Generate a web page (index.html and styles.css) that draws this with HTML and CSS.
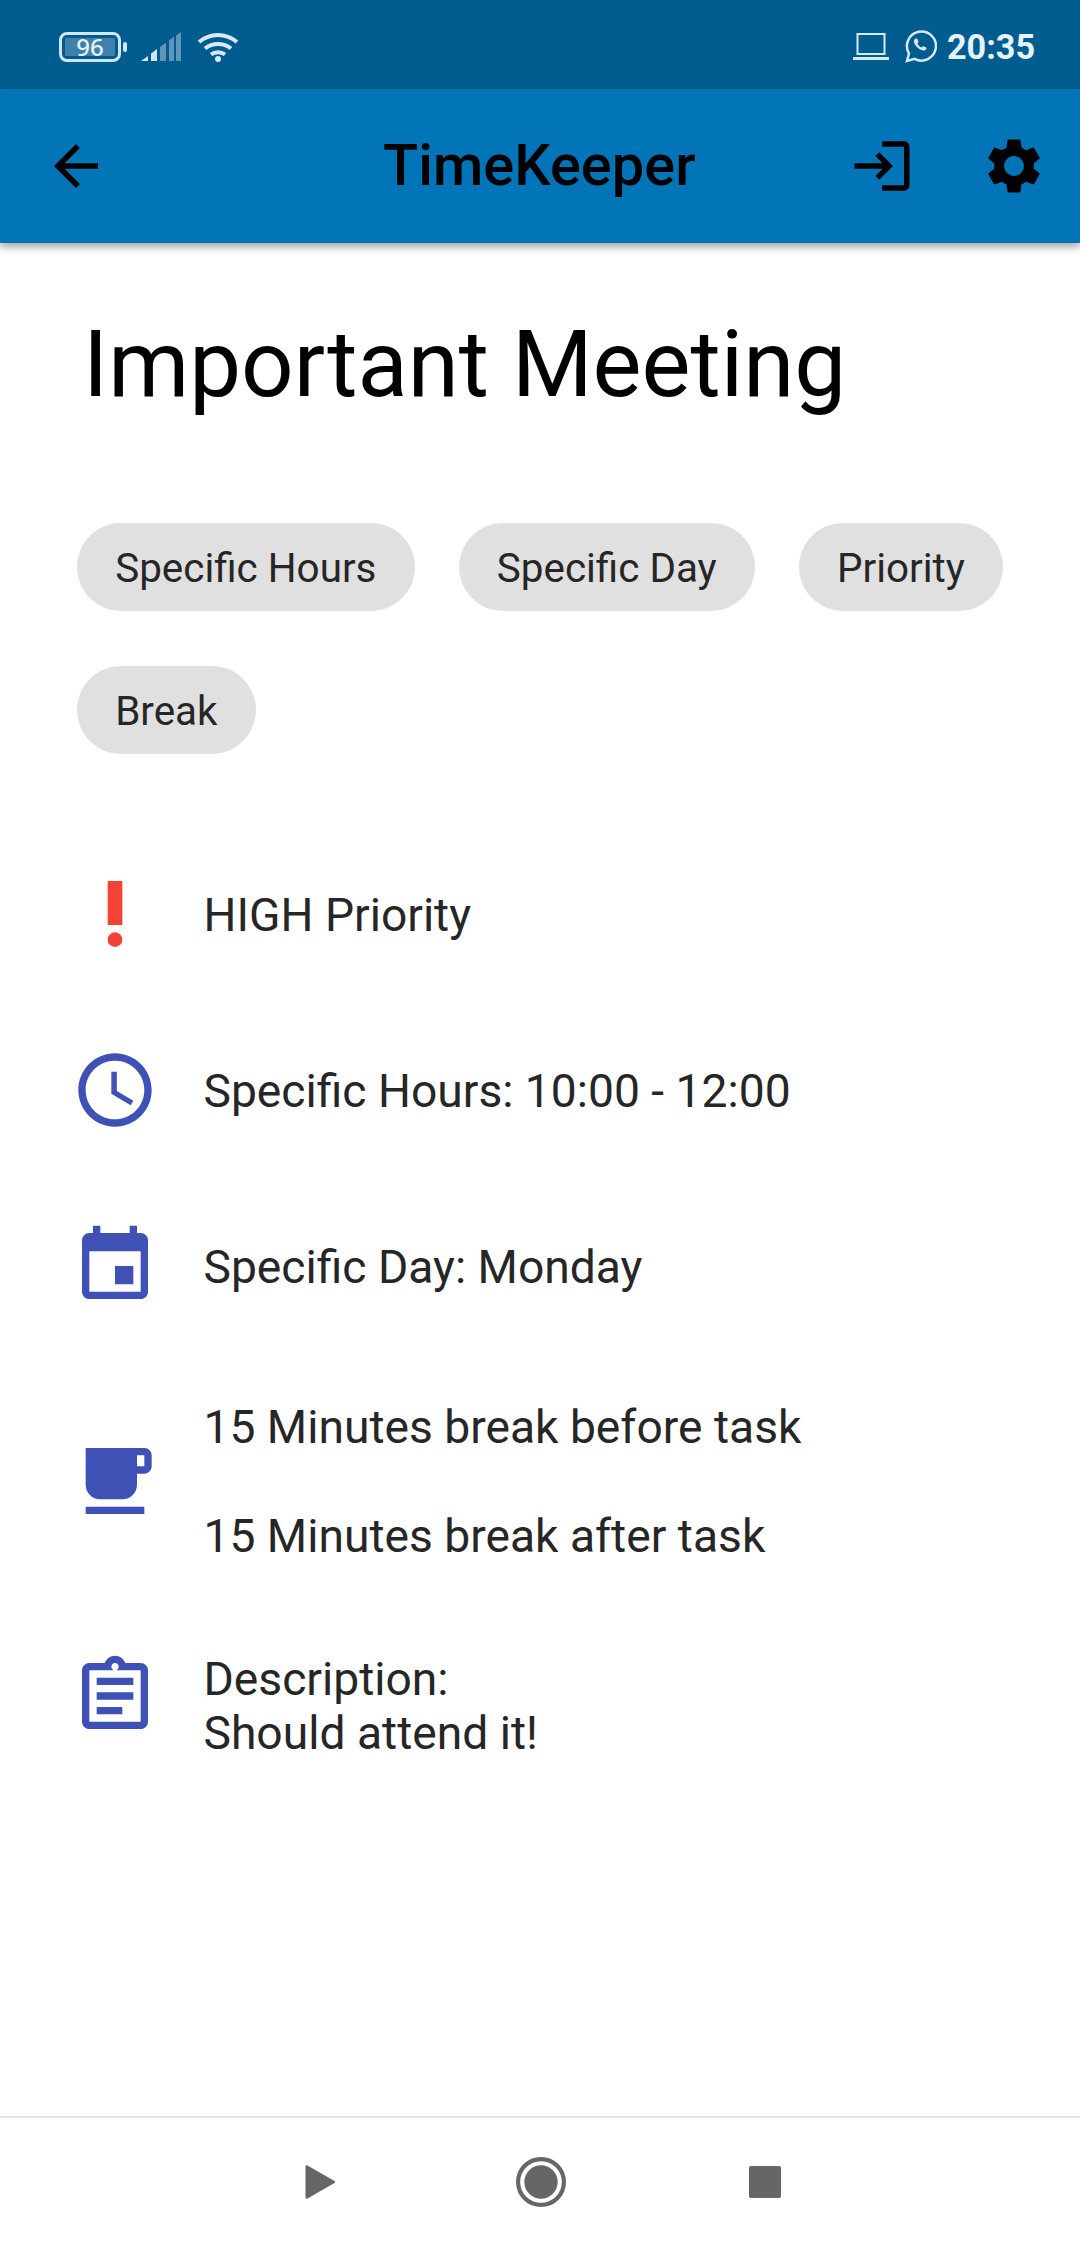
FILE: index.html
```html
<!DOCTYPE html>
<html lang="en">
<head>
<meta charset="utf-8">
<title>TimeKeeper</title>
<link rel="stylesheet" href="styles.css">
</head>
<body>
<div class="page">
  <div class="status">
    <div class="status-group">
      <div class="battery"><span class="bat-fill">96</span></div>
      <div class="bat-nub"></div>
      <svg class="s-signal" viewBox="0 0 40 30"><path class="on" d="M0 29l7-5v5zM10 21.500l6-4.500v12h-6z"/><path class="off" d="M19 15l6-4.500v18.500h-6zM28 8.500l5-4v24.500h-5zM35 3.500l5-3.500v29h-5z"/></svg>
      <svg class="s-wifi" viewBox="0 0 42 30"><path class="wifi-arc" d="M2 10c11-9.500 27-9.500 38 0M8 16.500c7.500-6 18.500-6 26 0M14 22.500c4-3 10-3 14 0"/><circle cx="21" cy="27" r="3" class="wifi-dot"/></svg>
    </div>
    <div class="status-group status-right">
      <svg class="s-laptop" viewBox="0 0 36 27"><rect x="4.500" y="1" width="27" height="20" class="laptop-line"/><path class="laptop-base" d="M0 24h36v3H0z"/></svg>
      <svg class="s-whats" viewBox="0 0 32 33"><path class="whats-line" d="M2.500 31l2-7.500A14.500 14.500 0 1 1 10 28.800z"/><path class="whats-phone" d="M11 8.500c-1.800 1.300-2 3.300-.8 5.500 1.500 2.700 3.700 4.900 6.500 6.100 2.200 1 4.200.4 5.200-1.400.3-.5.1-1-.3-1.200l-2.400-1.200c-.4-.2-.8-.1-1.100.3l-.8 1c-2-.8-3.500-2.300-4.400-4.200l.8-.8c.3-.3.3-.7.2-1.100l-1-2.400c-.3-.6-.9-.8-1.400-.6z"/></svg>
      <span class="time">20:35</span>
    </div>
  </div>

  <header class="appbar">
    <svg class="bar-icon back" viewBox="0 0 24 24"><path d="M20 11H7.830l5.590-5.590L12 4l-8 8 8 8 1.410-1.410L7.830 13H20v-2z"/></svg>
    <h1 class="app-title">TimeKeeper</h1>
    <svg class="bar-icon login" viewBox="0 0 24 24"><path d="M11 7L9.600 8.400l2.600 2.600H2v2h10.200l-2.600 2.600L11 17l5-5-5-5zm9 12h-8v2h8c1.100 0 2-.9 2-2V5c0-1.100-.9-2-2-2h-8v2h8v14z"/></svg>
    <svg class="bar-icon gear" viewBox="0 0 24 24"><path d="M19.140 12.940c.04-.3.06-.61.06-.94 0-.32-.02-.64-.07-.94l2.030-1.580c.18-.14.23-.41.12-.61l-1.920-3.320c-.12-.22-.37-.29-.59-.22l-2.390.96c-.5-.38-1.030-.7-1.620-.94l-.36-2.540c-.04-.24-.24-.41-.48-.41h-3.840c-.24 0-.43.17-.47.41l-.36 2.540c-.59.24-1.130.57-1.620.94l-2.390-.96c-.22-.08-.47 0-.59.22L2.740 8.870c-.12.21-.08.47.12.61l2.030 1.580c-.05.3-.09.63-.09.94s.02.64.07.94l-2.030 1.580c-.18.14-.23.41-.12.61l1.920 3.320c.12.22.37.29.59.22l2.390-.96c.5.38 1.030.7 1.620.94l.36 2.540c.05.24.24.41.48.41h3.840c.24 0 .44-.17.47-.41l.36-2.540c.59-.24 1.130-.56 1.620-.94l2.390.96c.22.08.47 0 .59-.22l1.920-3.320c.12-.22.07-.47-.12-.61l-2.010-1.580zM12 15.600c-1.980 0-3.600-1.620-3.600-3.600s1.620-3.600 3.600-3.600 3.600 1.620 3.600 3.600-1.620 3.600-3.600 3.600z"/></svg>
  </header>

  <main class="content">
    <h2 class="title">Important Meeting</h2>
    <div class="chips">
      <span class="chip">Specific Hours</span>
      <span class="chip">Specific Day</span>
      <span class="chip">Priority</span>
      <span class="chip">Break</span>
    </div>
    <div class="list">
      <div class="row">
        <svg class="icon red" viewBox="0 0 24 24"><circle cx="12" cy="19" r="2"/><path d="M10 3h4v12h-4z"/></svg>
        <div class="row-text"><p class="line">HIGH Priority</p></div>
      </div>
      <div class="row">
        <svg class="icon indigo" viewBox="0 0 24 24"><path d="M11.990 2C6.470 2 2 6.480 2 12s4.470 10 9.990 10C17.520 22 22 17.520 22 12S17.520 2 11.990 2zM12 20c-4.420 0-8-3.580-8-8s3.580-8 8-8 8 3.580 8 8-3.580 8-8 8z"/><path d="M12.500 7H11v6l5.250 3.150.75-1.230-4.500-2.670z"/></svg>
        <div class="row-text"><p class="line">Specific Hours: 10:00 - 12:00</p></div>
      </div>
      <div class="row">
        <svg class="icon indigo" viewBox="0 0 24 24"><path d="M17 12h-5v5h5v-5zM16 1v2H8V1H6v2H5c-1.110 0-1.990.9-1.990 2L3 19c0 1.100.89 2 2 2h14c1.100 0 2-.9 2-2V5c0-1.100-.9-2-2-2h-1V1h-2zm3 18H5V8h14v11z"/></svg>
        <div class="row-text"><p class="line">Specific Day: Monday</p></div>
      </div>
      <div class="row">
        <svg class="icon indigo" viewBox="0 0 24 24"><path d="M20 3H4v10c0 2.210 1.790 4 4 4h6c2.210 0 4-1.790 4-4v-3h2c1.110 0 2-.9 2-2V5c0-1.110-.89-2-2-2zm0 5h-2V5h2v3zM4 19h16v2H4z"/></svg>
        <div class="row-text breaks"><p class="line">15 Minutes break before task</p><p class="line">15 Minutes break after task</p></div>
      </div>
      <div class="row row-top">
        <svg class="icon indigo" viewBox="0 0 24 24"><path d="M19 3h-4.180C14.400 1.840 13.300 1 12 1c-1.300 0-2.400.84-2.820 2H5c-1.100 0-2 .9-2 2v14c0 1.100.9 2 2 2h14c1.100 0 2-.9 2-2V5c0-1.100-.9-2-2-2zm-7 0c.55 0 1 .45 1 1s-.45 1-1 1-1-.45-1-1 .45-1 1-1zm7 16H5V5h14v14zM7 15h7v2H7zm0-4h10v2H7zm0-4h10v2H7z"/></svg>
        <div class="row-text desc"><p class="line">Description:<br>Should attend it!</p></div>
      </div>
    </div>
  </main>

  <nav class="navbar">
    <svg class="nav-play" viewBox="0 0 30 36"><path d="M2 1.500L29 17c.8.500.8 1.500 0 2L2 34.500c-1 .5-2 0-2-1V2.500c0-1 1-1.500 2-1z"/></svg>
    <svg class="nav-home" viewBox="0 0 48 48"><circle cx="24" cy="24" r="22" class="home-ring"/><circle cx="24" cy="24" r="16"/></svg>
    <div class="nav-stop"></div>
  </nav>
</div>
</body>
</html>
```
FILE: styles.css
```css
* { box-sizing: border-box; }
html, body { margin: 0; padding: 0; background: #fff; }
body { font-family: Roboto, "Liberation Sans", sans-serif; }
p, h1, h2 { margin: 0; font-weight: 400; }

.page { width: 1080px; height: 2246px; display: flex; flex-direction: column; overflow: hidden; }

.status { height: 89px; flex: none; background: #005c8e; display: flex; justify-content: space-between; align-items: center; padding: 4px 45px 0 59px; color: #e3f2fb; }
.status-group { display: flex; align-items: center; }
.battery { width: 62px; height: 30px; border: 3px solid #cfe6f5; border-radius: 8px; padding: 3px; display: flex; margin-right: 2px; }
.bat-fill { flex: 1; background: #3f80ac; border-radius: 1px; text-align: center; font-family: "Noto Sans", sans-serif; font-size: 24px; font-weight: 500; line-height: 18px; color: #e3f2fb; }
.bat-nub { width: 4px; height: 10px; border-radius: 2px; background: #cfe6f5; margin-right: 14px; }
.s-signal { width: 40px; height: 30px; margin-right: 16px; }
.on { fill: #cfe6f5; }
.off { fill: #5f95b8; }
.s-wifi { width: 42px; height: 30px; }
.wifi-arc { fill: none; stroke: #d5e9f6; stroke-width: 4; }
.wifi-dot { fill: #d5e9f6; }
.s-laptop { width: 36px; height: 27px; margin-right: 15px; }
.laptop-line { fill: none; stroke: #d5e9f6; stroke-width: 2; }
.laptop-base { fill: #d5e9f6; }
.s-whats { width: 33px; height: 33px; margin-right: 10px; }
.whats-line { fill: none; stroke: #d5e9f6; stroke-width: 2.500; }
.whats-phone { fill: #d5e9f6; }
.time { font-size: 34.200px; font-weight: 700; line-height: 38px; }

.appbar { height: 154px; flex: none; background: #0175b8; display: flex; align-items: center; box-shadow: 0 4px 8px rgba(0, 0, 0, .35); position: relative; padding: 0 33px 0 43px; }
.bar-icon { width: 66px; height: 66px; flex: none; fill: #000; }
.app-title { flex: 1; margin: 0 0 3px 274px; font-size: 57.750px; font-weight: 500; color: #000; line-height: 64px; }
.login { margin-right: 66px; }

.content { flex: 1; padding-top: 67px; }
.title { font-size: 92.400px; line-height: 110px; color: #000; padding-left: 83px; }
.chips { display: flex; flex-wrap: wrap; gap: 55px 44px; padding: 103px 0 0 77px; }
.chip { height: 88px; padding: 3px 38.200px 0; border-radius: 44px; background: #e0e0e0; display: flex; align-items: center; font-size: 40.400px; color: #262626; }

.list { display: flex; flex-direction: column; gap: 88px; padding: 116px 0 0 70.500px; }
.row { display: flex; align-items: center; gap: 45px; min-height: 88px; }
.row-top { align-items: flex-start; }
.icon { width: 88px; height: 88px; flex: none; }
.red { fill: #f44336; }
.indigo { fill: #3f51b5; }
.row-text { display: flex; flex-direction: column; margin-top: 2px; }
.line { font-size: 46.200px; line-height: 54.500px; color: #262626; }
.breaks { gap: 54.500px; }
.desc { margin-top: 0; }

.navbar { height: 130px; flex: none; border-top: 2px solid #e4e4e4; background: #fff; display: flex; align-items: center; padding: 0 0 0 305px; }
.nav-play { width: 31px; height: 36px; fill: #666; margin-right: 180px; }
.nav-home { width: 50px; height: 50px; fill: #666; margin-right: 183px; }
.home-ring { fill: none; stroke: #666; stroke-width: 4; }
.nav-stop { width: 32px; height: 32px; border-radius: 2px; background: #666; }
```
